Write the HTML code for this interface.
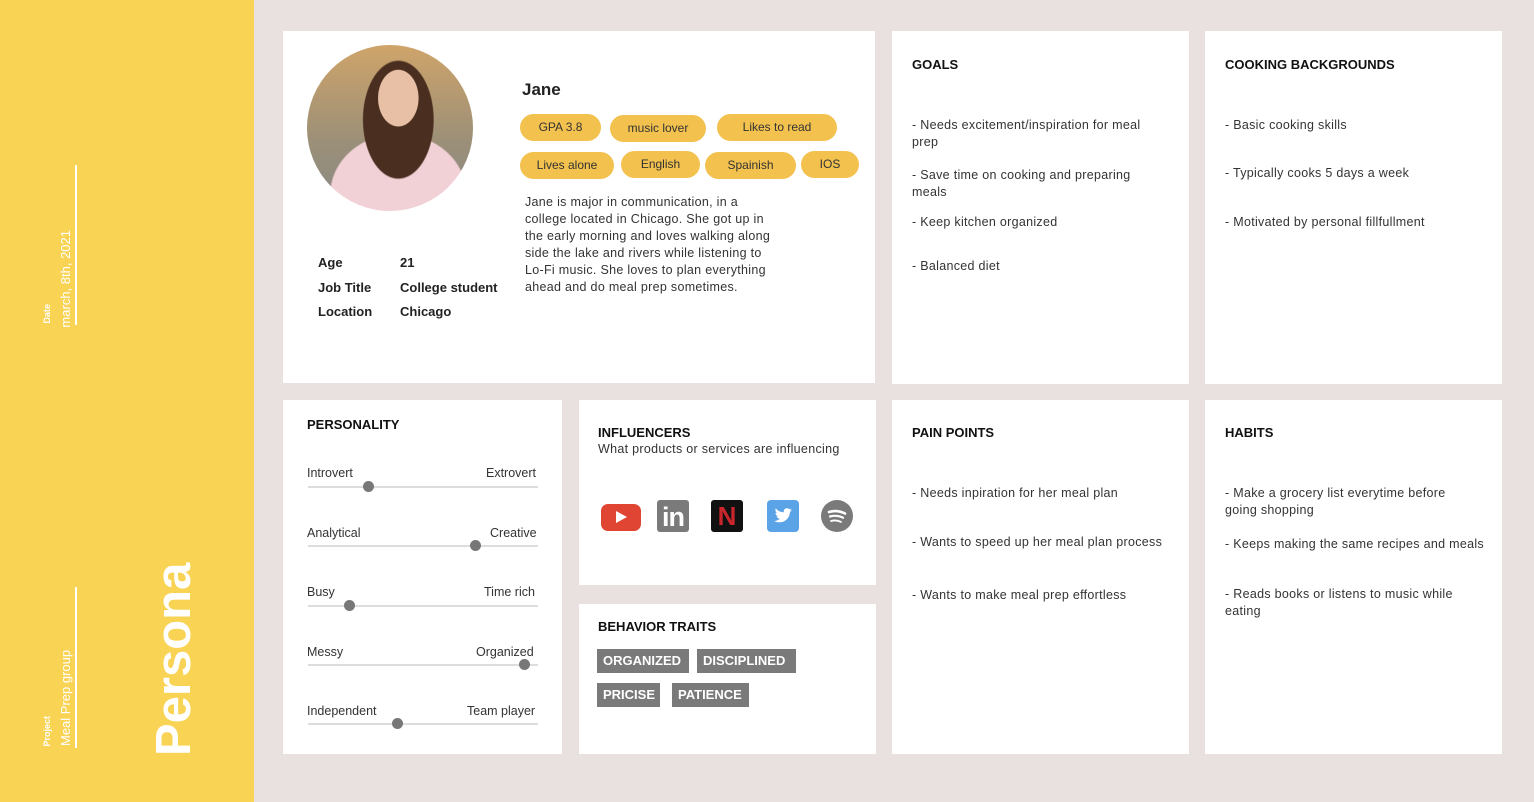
<!DOCTYPE html>
<html><head><meta charset="utf-8"><style>
*{margin:0;padding:0;box-sizing:border-box}
body{width:1534px;height:802px;background:#E9E1E0;font-family:"Liberation Sans",sans-serif;color:#222;position:relative;overflow:hidden}
.side{position:absolute;left:0;top:0;width:254px;height:802px;background:#F9D354}
.v{position:absolute;writing-mode:vertical-rl;transform:rotate(180deg);color:#fff;white-space:nowrap}
.card{position:absolute;background:#fff}
.a{position:absolute;white-space:nowrap}
h4{position:absolute;font-size:13px;font-weight:bold;color:#111}
.t{position:absolute;font-size:12.5px;color:#333;line-height:17px;letter-spacing:0.3px}
.tag{position:absolute;background:#F2C14E;border-radius:14px;height:27px;font-size:12px;color:#333;text-align:center;line-height:27px}
.sl{position:absolute;left:308px;width:230px;height:2px;background:#ddd}
.kn{position:absolute;width:11px;height:11px;border-radius:50%;background:#777;top:-5px}
.lab{position:absolute;font-size:12.5px;color:#333}
.bt{position:absolute;background:#7a7a7a;color:#fff;font-weight:bold;font-size:13px;height:24px;line-height:24px;padding:0 6px}
</style></head><body>
<div class="side">
<div class="v" style="left:42px;top:716px;font-size:9px;font-weight:bold">Project</div>
<div class="v" style="left:58px;top:650px;font-size:13px;height:96px">Meal Prep group</div>
<div style="position:absolute;left:75px;top:587px;width:2px;height:161px;background:#fff"></div>
<div class="v" style="left:42px;top:304px;font-size:9px;font-weight:bold">Date</div>
<div class="v" style="left:58px;top:230px;font-size:13px">march, 8th, 2021</div>
<div style="position:absolute;left:75px;top:165px;width:2px;height:160px;background:#fff"></div>
<div class="v" style="left:146px;top:560px;font-size:49px;font-weight:bold;line-height:56px;height:196px">Persona</div>
</div>

<div class="card" style="left:283px;top:31px;width:592px;height:352px">
<div style="position:absolute;left:24px;top:14px;width:166px;height:166px;border-radius:50%;background:radial-gradient(ellipse 20% 28% at 55% 32%,#e8c0a6 0 60%,transparent 62%),radial-gradient(ellipse 30% 50% at 55% 45%,#4a2e20 0 70%,transparent 72%),radial-gradient(ellipse 45% 40% at 55% 90%,#f1d0d6 0 90%,transparent 92%),linear-gradient(#cfa46a,#9a8f78 60%,#8a8a88);overflow:hidden"></div>
<div class="a" style="left:239px;top:49px;font-size:17px;font-weight:bold">Jane</div>
<div class="a" style="left:35px;top:220px;font-size:13px;font-weight:bold;line-height:24.5px">Age<br>Job Title<br>Location</div>
<div class="a" style="left:117px;top:220px;font-size:13px;font-weight:bold;line-height:24.5px">21<br>College student<br>Chicago</div>
<div class="t" style="left:242px;top:163px;width:255px;white-space:normal">Jane is major in communication, in a college located in Chicago. She got up in the early morning and loves walking along side the lake and rivers while listening to Lo-Fi music. She loves to plan everything ahead and do meal prep sometimes.</div>
</div>
<div class="tag" style="left:520px;top:114px;width:81px">GPA 3.8</div>
<div class="tag" style="left:610px;top:115px;width:96px">music lover</div>
<div class="tag" style="left:717px;top:114px;width:120px">Likes to read</div>
<div class="tag" style="left:520px;top:152px;width:94px">Lives alone</div>
<div class="tag" style="left:621px;top:151px;width:79px">English</div>
<div class="tag" style="left:705px;top:152px;width:91px">Spainish</div>
<div class="tag" style="left:801px;top:151px;width:58px">IOS</div>

<div class="card" style="left:892px;top:31px;width:297px;height:353px">
<h4 style="left:20px;top:26px">GOALS</h4>
<div class="t" style="left:20px;top:86px;width:240px">- Needs excitement/inspiration for meal prep</div>
<div class="t" style="left:20px;top:136px;width:228px">- Save time on cooking and preparing meals</div>
<div class="t" style="left:20px;top:183px">- Keep kitchen organized</div>
<div class="t" style="left:20px;top:227px">- Balanced diet</div>
</div>
<div class="card" style="left:1205px;top:31px;width:297px;height:353px">
<h4 style="left:20px;top:26px">COOKING BACKGROUNDS</h4>
<div class="t" style="left:20px;top:86px">- Basic cooking skills</div>
<div class="t" style="left:20px;top:134px">- Typically cooks 5 days a week</div>
<div class="t" style="left:20px;top:183px">- Motivated by personal fillfullment</div>
</div>

<div class="card" style="left:283px;top:400px;width:279px;height:354px">
<h4 style="left:24px;top:17px">PERSONALITY</h4>
</div>
<div class="lab" style="left:307px;top:466px">Introvert</div><div class="lab" style="left:486px;top:466px">Extrovert</div>
<div class="sl" style="top:486px"><div class="kn" style="left:55px"></div></div>
<div class="lab" style="left:307px;top:526px">Analytical</div><div class="lab" style="left:490px;top:526px">Creative</div>
<div class="sl" style="top:545px"><div class="kn" style="left:162px"></div></div>
<div class="lab" style="left:307px;top:585px">Busy</div><div class="lab" style="left:484px;top:585px">Time rich</div>
<div class="sl" style="top:605px"><div class="kn" style="left:36px"></div></div>
<div class="lab" style="left:307px;top:645px">Messy</div><div class="lab" style="left:476px;top:645px">Organized</div>
<div class="sl" style="top:664px"><div class="kn" style="left:211px"></div></div>
<div class="lab" style="left:307px;top:704px">Independent</div><div class="lab" style="left:467px;top:704px">Team player</div>
<div class="sl" style="top:723px"><div class="kn" style="left:84px"></div></div>

<div class="card" style="left:579px;top:400px;width:297px;height:185px">
<h4 style="left:19px;top:25px">INFLUENCERS</h4>
<div class="t" style="left:19px;top:41px">What products or services are influencing</div>
<div style="position:absolute;left:22px;top:104px;width:40px;height:27px;background:#DF4532;border-radius:7px"><div style="position:absolute;left:15px;top:7px;border-left:11px solid #fff;border-top:6.5px solid transparent;border-bottom:6.5px solid transparent"></div></div>
<div style="position:absolute;left:78px;top:100px;width:32px;height:32px;background:#7a7a7a;border-radius:3px;color:#fff;font-weight:bold;font-size:27px;line-height:34px;text-align:center;letter-spacing:-1px">in</div>
<div style="position:absolute;left:132px;top:100px;width:32px;height:32px;background:#111;border-radius:3px;color:#C8262B;font-weight:bold;font-size:26px;line-height:32px;text-align:center">N</div>
<div style="position:absolute;left:188px;top:100px;width:32px;height:32px;background:#5AA3E6;border-radius:4px"><svg width="32" height="32" viewBox="0 0 32 32"><path d="M7 21c6 3 15 1 16-9l2-2-2 .5 1.5-2-2.2.8c-2-2-6-1-5.5 3-4 0-6.5-2-8-4-1 2 0 4 1.5 5l-1.8-.4c0 2 1.5 3 2.8 3.5H9.5c.7 1.5 2 2.3 3.5 2.4C11 20.5 9 21 7 21z" fill="#fff"/></svg></div>
<div style="position:absolute;left:242px;top:100px;width:32px;height:32px;background:#7a7a7a;border-radius:50%"><svg width="32" height="32" viewBox="0 0 32 32" fill="none" stroke="#fff" stroke-linecap="round"><path d="M8 12c5-1.5 11-1 16 1.5" stroke-width="2.6"/><path d="M9 16.5c4.5-1.2 9-.8 13 1.2" stroke-width="2.2"/><path d="M10 21c3.5-1 7-.6 10 .9" stroke-width="1.8"/></svg></div>
</div>
<div class="card" style="left:579px;top:604px;width:297px;height:150px">
<h4 style="left:19px;top:15px">BEHAVIOR TRAITS</h4>
<div class="bt" style="left:18px;top:45px;width:92px">ORGANIZED</div>
<div class="bt" style="left:118px;top:45px;width:99px">DISCIPLINED</div>
<div class="bt" style="left:18px;top:79px;width:63px">PRICISE</div>
<div class="bt" style="left:93px;top:79px;width:77px">PATIENCE</div>
</div>

<div class="card" style="left:892px;top:400px;width:297px;height:354px">
<h4 style="left:20px;top:25px">PAIN POINTS</h4>
<div class="t" style="left:20px;top:85px">- Needs inpiration for her meal plan</div>
<div class="t" style="left:20px;top:134px">- Wants to speed up her meal plan process</div>
<div class="t" style="left:20px;top:187px">- Wants to make meal prep effortless</div>
</div>
<div class="card" style="left:1205px;top:400px;width:297px;height:354px">
<h4 style="left:20px;top:25px">HABITS</h4>
<div class="t" style="left:20px;top:85px;width:235px">- Make a grocery list everytime before going shopping</div>
<div class="t" style="left:20px;top:136px">- Keeps making the same recipes and meals</div>
<div class="t" style="left:20px;top:186px;width:235px">- Reads books or listens to music while eating</div>
</div>
</body></html>
